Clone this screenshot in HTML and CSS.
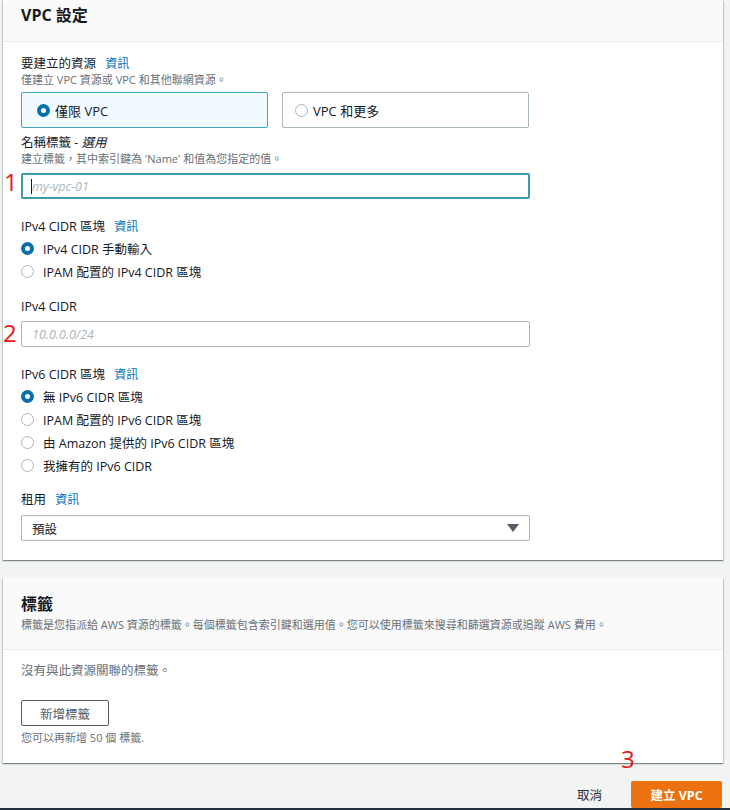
FILE: index.html
```html
<!DOCTYPE html>
<html lang="zh-Hant">
<head>
<meta charset="utf-8">
<title>VPC 設定</title>
<link rel="stylesheet" href="styles.css">
</head>
<body>
<div class="page">
  <section class="card card-settings">
    <header class="card-head card-head-top">
      <h2 class="card-title">VPC 設定</h2>
    </header>
    <div class="card-body">
      <div class="label">要建立的資源 <a class="info">資訊</a></div>
      <div class="desc">僅建立 VPC 資源或 VPC 和其他聯網資源。</div>
      <div class="tiles">
        <div class="tile tile-on"><span class="radio radio-on"></span><span>僅限 VPC</span></div>
        <div class="tile"><span class="radio"></span><span>VPC 和更多</span></div>
      </div>

      <div class="label label-s1">名稱標籤 - <i>選用</i></div>
      <div class="desc">建立標籤，其中索引鍵為 'Name' 和值為您指定的值。</div>
      <div class="input input-focus input-s1"><span class="caret"></span><span class="ph">my-vpc-01</span></div>

      <div class="label label-s2">IPv4 CIDR 區塊 <a class="info">資訊</a></div>
      <div class="radios">
        <div class="opt"><span class="radio radio-on"></span><span>IPv4 CIDR 手動輸入</span></div>
        <div class="opt"><span class="radio"></span><span>IPAM 配置的 IPv4 CIDR 區塊</span></div>
      </div>

      <div class="label label-s3">IPv4 CIDR</div>
      <div class="input input-s2"><span class="ph">10.0.0.0/24</span></div>

      <div class="label label-s2">IPv6 CIDR 區塊 <a class="info">資訊</a></div>
      <div class="radios">
        <div class="opt"><span class="radio radio-on"></span><span>無 IPv6 CIDR 區塊</span></div>
        <div class="opt"><span class="radio"></span><span>IPAM 配置的 IPv6 CIDR 區塊</span></div>
        <div class="opt"><span class="radio"></span><span>由 Amazon 提供的 IPv6 CIDR 區塊</span></div>
        <div class="opt"><span class="radio"></span><span>我擁有的 IPv6 CIDR</span></div>
      </div>

      <div class="label label-s4">租用 <a class="info">資訊</a></div>
      <div class="input select input-s3"><span class="val">預設</span>
        <svg class="arrow" width="12" height="8" viewBox="0 0 12 8"><path d="M0 0 H12 L6 8 Z" fill="#545b64"/></svg>
      </div>
    </div>
  </section>

  <section class="card card-tags">
    <header class="card-head card-head-tags">
      <h2 class="card-title">標籤</h2>
      <div class="desc head-desc">標籤是您指派給 AWS 資源的標籤。每個標籤包含索引鍵和選用值。您可以使用標籤來搜尋和篩選資源或追蹤 AWS 費用。</div>
    </header>
    <div class="card-body tags-body">
      <div class="empty">沒有與此資源關聯的標籤。</div>
      <button class="btn-normal">新增標籤</button>
      <div class="desc hint">您可以再新增 50 個 標籤.</div>
    </div>
  </section>

  <footer class="actions">
    <button class="btn-link">取消</button>
    <button class="btn-primary">建立 VPC</button>
  </footer>
  <div class="bottom-bar"></div>

  <span class="mark mark-1">1</span>
  <span class="mark mark-2">2</span>
  <span class="mark mark-3">3</span>
</div>
</body>
</html>
```

FILE: styles.css
```css
* { box-sizing: border-box; }
html, body { margin: 0; padding: 0; }
body {
  background: #f2f3f3;
  font-family: "Open Sans", "Noto Sans CJK TC", sans-serif;
  color: #16191f;
  font-size: 13px;
  width: 730px;
  height: 810px;
  overflow: hidden;
}
.page {
  position: relative;
  height: 810px;
  display: flex;
  flex-direction: column;
}
.card {
  background: #fff;
  margin-left: 3px;
  width: 720px;
  box-shadow: 0 1px 1px 0 rgba(0,28,36,.3), 1px 1px 1px 0 rgba(0,28,36,.15), -1px 1px 1px 0 rgba(0,28,36,.15);
}
.card-head {
  background: #fafafa;
  border-bottom: 1px solid #eaeded;
  padding: 0 18px;
}
.card-head-top { padding-top: 4px; padding-bottom: 15px; }
.card-title {
  margin: 0;
  font-size: 16px;
  line-height: 22px;
  font-weight: 700;
  color: #16191f;
}
.card-body { padding: 13px 18px 19px; display: flex; flex-direction: column; align-items: flex-start; }

.label { font-size: 12.5px; line-height: 18px; color: #16191f; }
.label i { font-style: italic; }
.info { color: #0073bb; font-size: 12px; margin-left: 6px; text-decoration: none; }
.desc { font-size: 11px; line-height: 14px; color: #687078; }

.label-s1 { margin-top: 6px; }
.label-s2 { margin-top: 19px; }
.label-s3 { margin-top: 15px; }
.label-s4 { margin-top: 14px; }

.tiles { display: flex; gap: 14px; margin-top: 5px; }
.tile {
  width: 247px;
  height: 36px;
  border: 1px solid #aab7b8;
  border-radius: 2px;
  display: flex;
  align-items: center;
  gap: 5px;
  padding-left: 12px;
  background: #fff;
}
.tile-on { background: #f1faff; border-color: #44a4c4; padding-left: 15px; }

.radio {
  width: 13px;
  height: 13px;
  border-radius: 50%;
  border: 1px solid #aab7b8;
  background: #fff;
  flex: none;
}
.radio-on { border: 4px solid #0a6fa8; }

.radios { display: flex; flex-direction: column; margin-top: 1px; }
.opt { height: 23px; display: flex; align-items: center; gap: 9px; font-size: 12.5px; }

.input {
  width: 509px;
  height: 26px;
  border: 1px solid #aab7b8;
  border-radius: 2px;
  display: flex;
  align-items: center;
  padding-left: 10px;
  position: relative;
  background: #fff;
}
.input-focus { border: 2px solid #3b9aac; padding-left: 9px; }
.input-s1 { margin-top: 7px; }
.input-s2 { margin-top: 5px; }
.input-s3 { margin-top: 6px; }
.ph { color: #aab7b8; font-style: italic; font-size: 12.5px; }
.caret {
  position: absolute;
  left: 8px;
  top: 4px;
  width: 1px;
  height: 15px;
  background: #16191f;
}
.select { padding-left: 10px; justify-content: space-between; padding-right: 10px; }
.val { font-size: 12.5px; color: #16191f; }

.card-tags { margin-top: 18px; }
.card-head-tags { padding-top: 15px; padding-bottom: 17px; }
.head-desc { margin-top: 2px; line-height: 15px; }
.tags-body { padding-top: 12px; padding-bottom: 18px; }
.empty { font-size: 12.5px; line-height: 18px; color: #687078; }
.btn-normal {
  margin-top: 20px;
  width: 88px;
  height: 26px;
  border: 1px solid #545b64;
  border-radius: 2px;
  background: #fff;
  color: #545b64;
  font-family: inherit;
  font-size: 12.5px;
  padding: 0;
}
.hint { margin-top: 5px; }

.actions {
  margin-top: 18px;
  display: flex;
  justify-content: flex-end;
  align-items: center;
  padding-right: 8px;
}
.btn-link {
  background: none;
  border: none;
  font-family: inherit;
  font-size: 12.5px;
  color: #2b3138;
  padding: 0 29px 0 0;
}
.btn-primary {
  width: 91px;
  height: 27px;
  background: #ec7211;
  border: none;
  border-radius: 2px;
  color: #fff;
  font-family: inherit;
  font-weight: 700;
  font-size: 12.5px;
  padding: 0;
}
.bottom-bar { height: 2px; background: #232f3e; margin-top: auto; }

.mark {
  position: absolute;
  color: #e8141b;
  font-family: "Open Sans", sans-serif;
  font-size: 24px;
  line-height: 24px;
  font-weight: 400;
}
.mark-1 { left: 4px; top: 170px; }
.mark-2 { left: 3px; top: 321px; }
.mark-3 { left: 621px; top: 747px; }
```
